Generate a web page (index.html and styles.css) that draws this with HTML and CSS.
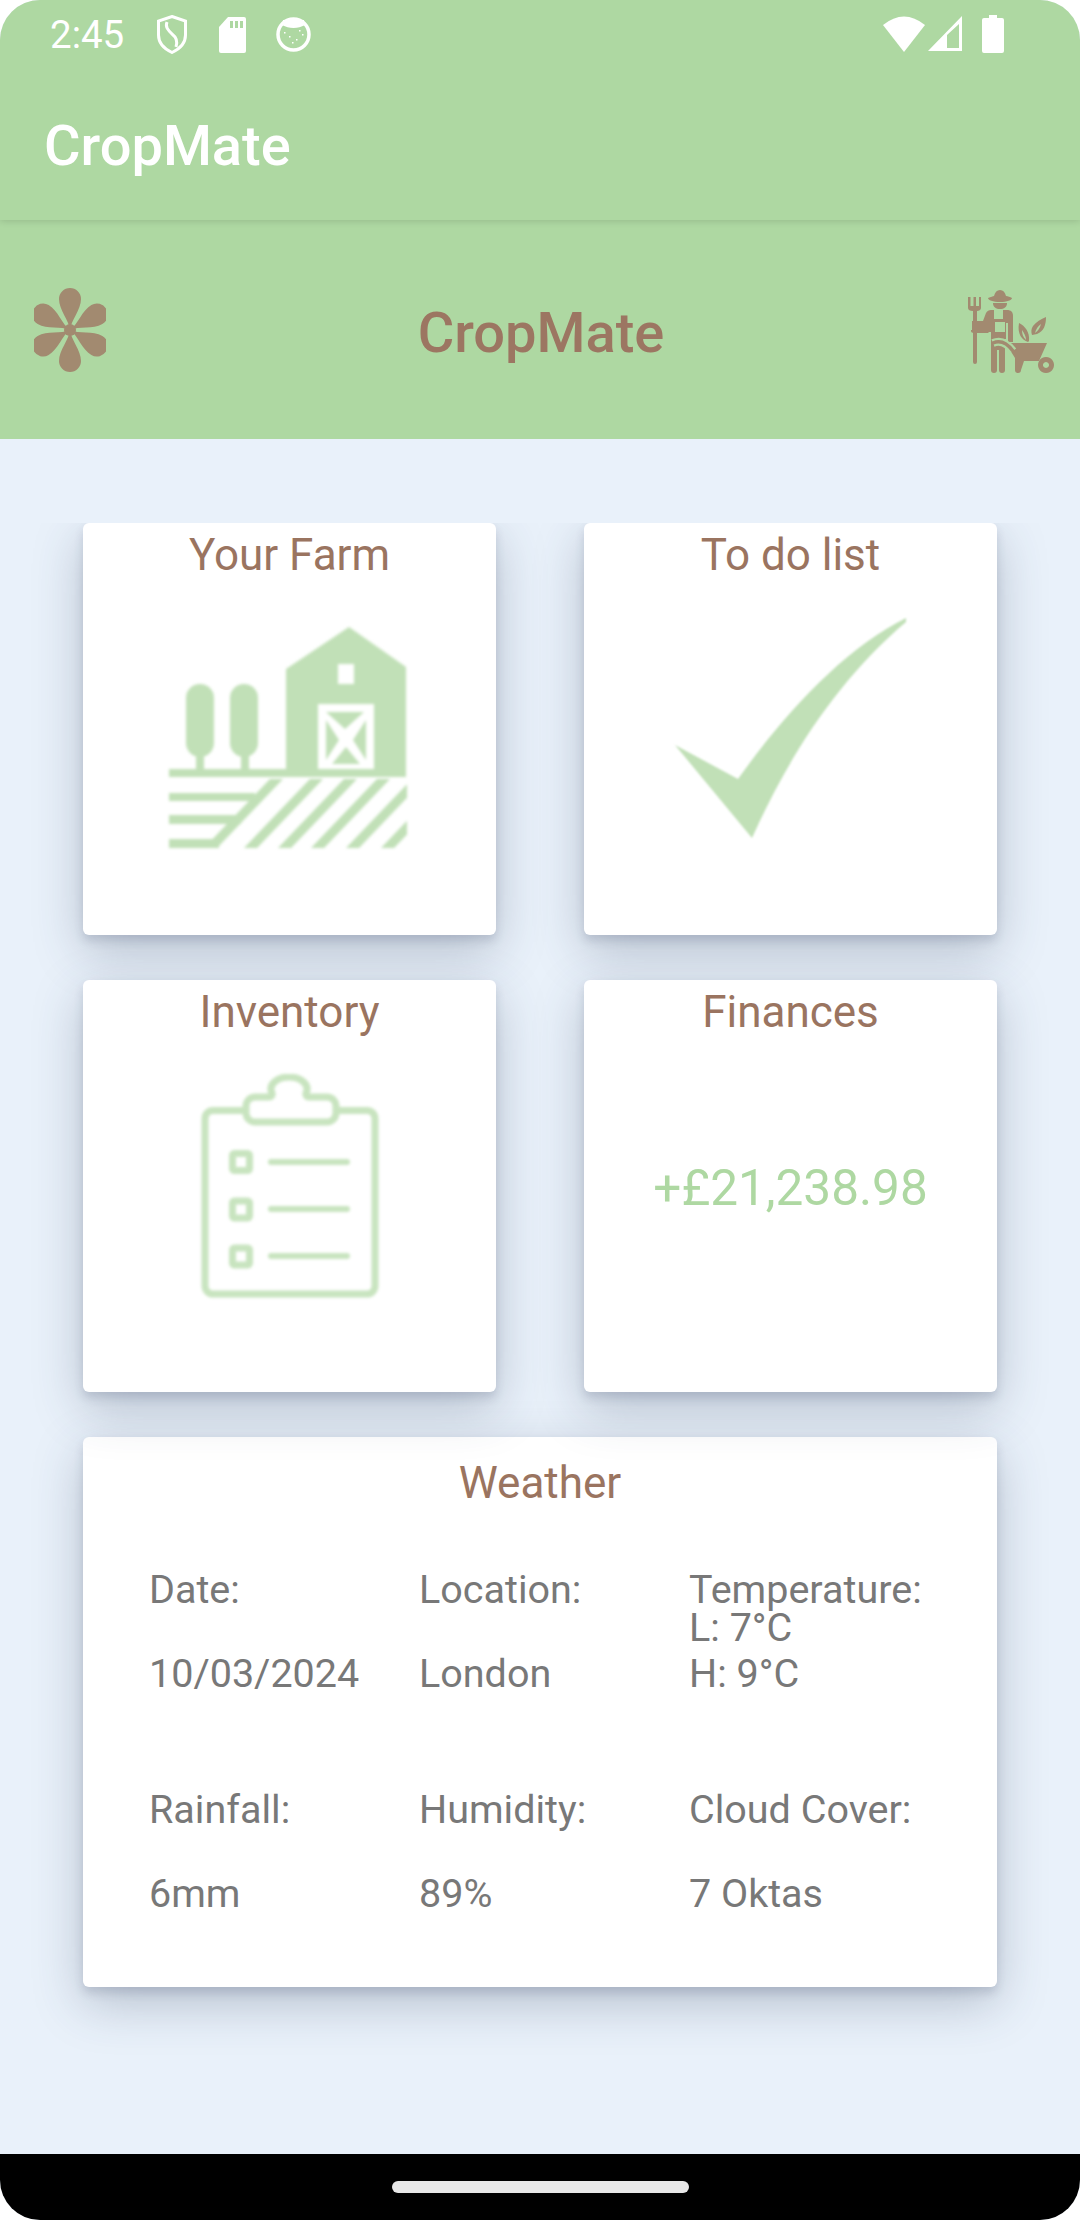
FILE: index.html
```html
<!DOCTYPE html>
<html lang="en">

<head>
    <meta charset="UTF-8">
    <meta name="viewport" content="width=device-width, initial-scale=1.0">
    <title>CropMate</title>
    <link rel="stylesheet" href="styles.css">
</head>

<body>
    <div class="phone">
        <div class="top-bars">
            <div class="status-bar">
                <span class="status-time">2:45</span>
                <svg class="ic-shield" viewBox="0 0 30 39" fill="none" stroke="#fff" stroke-width="3">
                    <path d="M15 1.500 28.500 6v14c0 8-6 14-13.500 17.500C7.500 34 1.500 28 1.500 20V6Z" />
                    <path d="M10 7c-2 5 1 8 5 12 4 3 6 7 4 13" />
                </svg>
                <svg class="ic-sd" viewBox="0 0 27 36">
                    <path fill="#fff" d="M9 0h16a2 2 0 0 1 2 2v32a2 2 0 0 1-2 2H2a2 2 0 0 1-2-2V10Z" />
                    <path fill="#aed8a2" d="M11 4h3v7h-3zM16 4h3v7h-3zM21 4h3v7h-3z" />
                </svg>
                <svg class="ic-face" viewBox="0 0 35 35">
                    <circle cx="17.500" cy="17.500" r="15.500" fill="none" stroke="#fff" stroke-width="3.500" />
                    <path fill="#fff" d="M6 8c4 2 7 3 11.500 3S25 10 29 8l-1-5H7Z" />
                    <path fill="#fff" d="M8 15h1.500v1.500H8zM13 19h1.500v1.500H13zM20 22h1.500v1.500H20zM26 17h1.500v1.500H26zM16 25h1.500v1.500H16zM23 13h1.500v1.500H23z" />
                </svg>
                <div class="status-right">
                    <svg class="ic-wifi" viewBox="0 0 42 36">
                        <path fill="#fff" d="M0 9Q21-8 42 9L21 36Z" />
                    </svg>
                    <svg class="ic-signal" viewBox="0 0 34 35">
                        <path fill="#fff" fill-rule="evenodd" d="M34 0V35H0ZM31 8 19 19V32H31Z" />
                    </svg>
                    <svg class="ic-battery" viewBox="0 0 22 38">
                        <path fill="#fff" d="M7 0h8v3h5a2 2 0 0 1 2 2v31a2 2 0 0 1-2 2H2a2 2 0 0 1-2-2V5a2 2 0 0 1 2-2h5Z" />
                    </svg>
                </div>
            </div>
            <div class="app-bar">CropMate</div>
        </div>

        <header class="brand-row">
            <svg class="ic-flower" viewBox="-36 -42 72 84" fill="#a28a70">
                <path id="petal" d="M0 0C-1-10-11-20-11-31A11 11 0 0 1 11-31C11-20 1-10 0 0Z" />
                <use href="#petal" transform="rotate(60)" />
                <use href="#petal" transform="rotate(120)" />
                <use href="#petal" transform="rotate(180)" />
                <use href="#petal" transform="rotate(240)" />
                <use href="#petal" transform="rotate(300)" />
                <circle r="6" />
            </svg>
            <h1 class="brand-title">CropMate</h1>
            <svg class="ic-farmer" viewBox="0 0 86 84" fill="#a28a70">
                <!-- pitchfork -->
                <path d="M0 7h2.500v9h3V7h2.500v9h3V7H13v11c0 2-2 3-4 3v51a1.800 1.800 0 0 1-4 0V21c-3 0-5-1-5-3Z" />
                <!-- hat and head -->
                <path d="M20 8c3-1 5-2 6-2 1-4 3-6 6-6s5 2 6 6c2 0 4 1 6 2 0 2-5 4-12 4S20 10 20 8Z" />
                <path d="M25 13h14c0 4-3 6-7 6s-7-2-7-6Z" />
                <!-- body with bib -->
                <path fill-rule="evenodd" d="M4 31h11l3-8c1-2 3-3 5-3h3v9h9v-9h4c4 0 6 2 6 6v26h-5V33h-2v16h-1v31a3 3 0 0 1-6 0V60h-2v20a3 3 0 0 1-6 0V42h-2l-1 1H6c-2 0-3-1-3-2v-1h1ZM27 32v10h10V32Z" />
                <!-- barrow -->
                <path d="M42 53H79L71 71H56L53 80a2.800 2.800 0 0 1-6 0V68L42 60Z" />
                <path fill="none" stroke="#aed8a2" stroke-width="8" d="M25 53c7-3 14 0 20 8" />
                <path fill="none" stroke="#a28a70" stroke-width="3.500" stroke-linecap="round" d="M25 53c7-3 14 0 20 8" />
                <path fill-rule="evenodd" d="M78 67a8 8 0 1 0 .010 0Zm0 5a3 3 0 1 1-.010 0Z" />
                <!-- leaves -->
                <path fill-rule="evenodd" d="M51 33c6 3 11 9 10 18l-1 1C54 50 49 44 51 33Zm3 7c0 4 1 7 4 10 0-4-2-7-4-10Z" />
                <path fill-rule="evenodd" d="M78 27c0 8-2 14-9 17l-5 1c-1-3-1-6 1-9 3-4 8-7 13-9Zm-5 7c-3 2-5 5-6 9 3-2 5-5 6-9Z" />
            </svg>
        </header>

        <main class="content">
            <div class="tile-row">
                <section class="tile">
                    <h2 class="tile-title">Your Farm</h2>
                    <svg class="ic-farm" viewBox="0 0 238 222" fill="#c1e0b7">
                        <path d="M117 42 180 0 237 40V150H0V142H117Z" />
                        <rect x="17" y="57" width="28" height="73" rx="14" />
                        <rect x="61" y="57" width="28" height="73" rx="14" />
                        <path d="M27 125h8v20h-8zM72 125h8v20h-8z" />
                        <path fill="#fff" d="M169 37h16v20h-16zM149 77h56v65h-56z" />
                        <path d="M157 85H195L176 102ZM163 137 177 120 191 137ZM157 93 170 113 157 133ZM197 93 184 113 197 133Z" />
                        <path d="M0 166h86v8H0zM0 188h72v9H0zM0 212h50v9H0z" />
                        <path d="M35 221H48L114 152H101Z" />
                        <path d="M75 221H88L154 152H141Z" />
                        <path d="M109 221H122L188 152H175Z" />
                        <path d="M142 221H155L221 152H208Z" />
                        <path d="M177 221H190L256 152H243Z" />
                        <path d="M212 221H225L291 152H278Z" />
                    </svg>
                </section>
                <section class="tile">
                    <h2 class="tile-title">To do list</h2>
                    <svg class="ic-check" viewBox="0 0 231 220" fill="#c1e0b7">
                        <path d="M231 0C170 30 110 95 63 161L0 127 77 220C115 135 165 60 231 4Z" />
                    </svg>
                </section>
            </div>
            <div class="tile-row">
                <section class="tile">
                    <h2 class="tile-title">Inventory</h2>
                    <svg class="ic-clipboard" viewBox="0 0 178 224" fill="none" stroke="#c8e4bf" stroke-width="7">
                        <path d="M42 36.500H12a8 8 0 0 0-8 8V212a8 8 0 0 0 8 8H166a8 8 0 0 0 8-8V44.500a8 8 0 0 0-8-8H138" />
                        <path d="M54 23H68a3 3 0 0 0 3-4A18 12 0 1 1 105 19a3 3 0 0 0 3 4H126a9 9 0 0 1 9 9V39a9 9 0 0 1-9 9H54a9 9 0 0 1-9-9V32a9 9 0 0 1 9-9Z" />
                        <rect x="31.500" y="79.500" width="17" height="17" rx="2" />
                        <rect x="31.500" y="127" width="17" height="17" rx="2" />
                        <rect x="31.500" y="174" width="17" height="17" rx="2" />
                        <path stroke-linecap="round" stroke-width="6" d="M70 88H146M70 135H146M70 182H146" />
                    </svg>
                </section>
                <section class="tile">
                    <h2 class="tile-title">Finances</h2>
                    <div class="balance">+£21,238.98</div>
                </section>
            </div>

            <section class="weather">
                <h2 class="weather-title">Weather</h2>
                <div class="weather-grid">
                    <div class="wx-label">Date:</div>
                    <div class="wx-label">Location:</div>
                    <div class="wx-label">Temperature:<br>L: 7°C</div>
                    <div class="wx-value">10/03/2024</div>
                    <div class="wx-value">London</div>
                    <div class="wx-value">H: 9°C</div>
                    <div class="wx-label wx-second">Rainfall:</div>
                    <div class="wx-label wx-second">Humidity:</div>
                    <div class="wx-label wx-second">Cloud Cover:</div>
                    <div class="wx-value">6mm</div>
                    <div class="wx-value">89%</div>
                    <div class="wx-value">7 Oktas</div>
                </div>
            </section>
        </main>

        <div class="nav-bar">
            <div class="home-pill"></div>
        </div>
    </div>
</body>

</html>
```

FILE: styles.css
```css
* {
    box-sizing: border-box;
}

html,
body {
    margin: 0;
    padding: 0;
    background-color: #fff;
}

.phone {
    width: 1080px;
    height: 2220px;
    display: flex;
    flex-direction: column;
    overflow: hidden;
    border-radius: 40px;
    background-color: #e9f1fa;
    font-family: Roboto, "Liberation Sans", sans-serif;
}

.top-bars {
    position: relative;
    z-index: 2;
    background-color: #aed8a2;
    box-shadow: 0 1px 7px rgba(0, 0, 0, 0.14);
}

.status-bar {
    height: 63px;
    display: flex;
    align-items: flex-start;
    padding: 15px 76px 0 50px;
    color: #fff;
}

.status-time {
    font-size: 38.500px;
    line-height: 40px;
}

.status-bar svg {
    display: block;
    flex: none;
}

.ic-shield {
    width: 30px;
    height: 39px;
    margin-left: 33px;
}

.ic-sd {
    width: 27px;
    height: 36px;
    margin: 2px 0 0 32px;
}

.ic-face {
    width: 35px;
    height: 35px;
    margin: 2px 0 0 30px;
}

.status-right {
    margin-left: auto;
    display: flex;
    align-items: flex-start;
}

.ic-wifi {
    width: 42px;
    height: 36px;
    margin-top: 1px;
}

.ic-signal {
    width: 34px;
    height: 35px;
    margin: 1px 0 0 3px;
}

.ic-battery {
    width: 22px;
    height: 38px;
    margin-left: 20px;
}

.app-bar {
    height: 157px;
    display: flex;
    align-items: center;
    padding: 8px 0 0 44px;
    font-size: 56px;
    font-weight: 500;
    color: #fff;
}

.brand-row {
    height: 219px;
    flex: none;
    display: flex;
    align-items: center;
    justify-content: space-between;
    padding: 0 26px 0 34px;
    background-color: #aed8a2;
}

.brand-title {
    margin: 7px 0 0 8px;
    font-size: 56px;
    font-weight: 500;
    color: #9c7662;
}

.ic-flower {
    width: 72px;
    height: 84px;
}

.ic-farmer {
    width: 86px;
    height: 84px;
    margin-top: 5px;
}

.content {
    flex: 1;
    margin-top: 84px;
    padding: 0 83px;
    overflow: hidden;
}

.tile-row {
    display: flex;
    justify-content: space-between;
    margin-bottom: 45px;
}

.tile {
    width: 413px;
    height: 412px;
    display: flex;
    flex-direction: column;
    align-items: center;
    padding-top: 6px;
    border-radius: 6px;
    background-color: #fff;
    box-shadow: 0 6px 10px rgba(50, 65, 95, 0.16), 0 16px 50px rgba(50, 65, 95, 0.28);
}

.tile-title,
.weather-title {
    margin: 0;
    font-size: 44px;
    line-height: 52px;
    font-weight: 400;
    color: #9a7460;
}

.ic-farm {
    width: 238px;
    height: 222px;
    margin: 46px 3px 0 0;
    filter: blur(1.400px);
}

.ic-check {
    width: 231px;
    height: 220px;
    margin-top: 37px;
    filter: blur(1.200px);
}

.ic-clipboard {
    width: 178px;
    height: 224px;
    margin-top: 36px;
    filter: blur(1.400px);
}

.balance {
    margin-top: 121px;
    font-size: 49.500px;
    line-height: 58px;
    color: #aed8a2;
}

.weather {
    height: 550px;
    padding-top: 20px;
    border-radius: 6px;
    background-color: #fff;
    box-shadow: 0 6px 10px rgba(50, 65, 95, 0.16), 0 16px 50px rgba(50, 65, 95, 0.28);
}

.weather-title {
    text-align: center;
}

.weather-grid {
    display: grid;
    grid-template-columns: repeat(3, 270px);
    margin-top: 62px;
    padding-left: 66px;
    font-size: 39.500px;
    color: #787878;
}

.wx-label {
    height: 80px;
    line-height: 38px;
}

.wx-second {
    margin-top: 94px;
}

.wx-value {
    line-height: 46px;
}

.nav-bar {
    height: 66px;
    flex: none;
    display: flex;
    justify-content: center;
    padding-top: 27px;
    background-color: #000;
}

.home-pill {
    width: 297px;
    height: 12px;
    border-radius: 6px;
    background-color: #e8e8e8;
}
```
